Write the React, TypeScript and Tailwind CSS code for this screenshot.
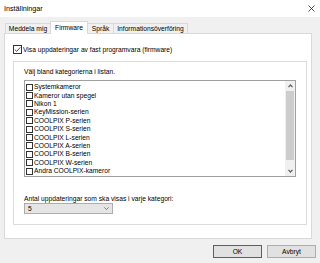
import React from "react";

const items = [
  "Systemkameror",
  "Kameror utan spegel",
  "Nikon 1",
  "KeyMission-serien",
  "COOLPIX P-serien",
  "COOLPIX S-serien",
  "COOLPIX L-serien",
  "COOLPIX A-serien",
  "COOLPIX B-serien",
  "COOLPIX W-serien",
  "Andra COOLPIX-kameror",
  "COOLPIX-tillbehör",
];

export default function App() {
  return (
    <div className="w-[320px] h-[263px] bg-[#f0f0f0] overflow-hidden text-black font-['Liberation_Sans',Arial,sans-serif] text-[6.7px] leading-[8px]">
      {/* Title bar */}
      <div className="h-[17px] bg-white flex items-center justify-between pl-[4px] pr-[5px]">
        <span className="text-[7.2px]">Inställningar</span>
        <svg width="7" height="7" viewBox="0 0 7 7">
          <path d="M0.5 0.5 L6.5 6.5 M6.5 0.5 L0.5 6.5" stroke="#222" strokeWidth="0.8" />
        </svg>
      </div>

      <div className="px-[4px]">
        {/* Tabs */}
        <div className="flex items-end h-[16px] pl-[1px]">
          <div className="w-[46px] h-[10px] border border-b-0 border-[#d9d9d9] bg-[#f0f0f0] flex items-center justify-center">
            Meddela mig
          </div>
          <div className="-ml-[1px] w-[38px] h-[13px] -mb-[1px] border border-b-0 border-[#d9d9d9] bg-white relative z-10 flex items-center justify-center pb-[1px]">
            Firmware
          </div>
          <div className="-ml-[1px] w-[27px] h-[10px] border border-b-0 border-[#d9d9d9] bg-[#f0f0f0] flex items-center justify-center">
            Språk
          </div>
          <div className="-ml-[1px] w-[75px] h-[10px] border border-b-0 border-[#d9d9d9] bg-[#f0f0f0] flex items-center justify-center">
            Informationsöverföring
          </div>
        </div>

        {/* Panel */}
        <div className="w-[308px] h-[206px] border border-[#d9d9d9] bg-white pt-[11px] pl-[8px]">
          <div className="flex items-center h-[9px]">
            <div className="w-[9px] h-[9px] border border-[#333] bg-white flex items-center justify-center">
              <svg width="7" height="7" viewBox="0 0 7 7">
                <path d="M0.8 3.6 L2.7 5.4 L6.3 1.4" stroke="#222" strokeWidth="0.8" fill="none" />
              </svg>
            </div>
            <span className="ml-[1px]">Visa uppdateringar av fast programvara (firmware)</span>
          </div>

          {/* Group box */}
          <div className="mt-[7px] w-[294px] h-[164px] border border-[#dcdcdc] pt-[6px] pl-[10px]">
            <div className="h-[8px]">Välj bland kategorierna i listan.</div>

            {/* Listbox */}
            <div className="mt-[4px] w-[272px] h-[97px] border border-[#a0a0a0] flex bg-white">
              <div className="flex-1 pt-[2px] pl-[1px] overflow-hidden">
                {items.map((it) => (
                  <div key={it} className="h-[8.4px] flex items-center">
                    <div className="w-[7px] h-[7px] border border-[#333] bg-white shrink-0" />
                    <span className="ml-[1px] whitespace-nowrap">{it}</span>
                  </div>
                ))}
              </div>
              <div className="w-[10px] flex flex-col bg-[#f0f0f0]">
                <div className="h-[10px] flex items-center justify-center">
                  <svg width="5" height="4" viewBox="0 0 5 4">
                    <path d="M0.5 3.2 L2.5 1 L4.5 3.2" stroke="#606060" strokeWidth="1.2" fill="none" />
                  </svg>
                </div>
                <div className="h-[69px] mx-[1px] bg-[#cdcdcd]" />
                <div className="flex-1" />
                <div className="h-[10px] flex items-center justify-center">
                  <svg width="5" height="4" viewBox="0 0 5 4">
                    <path d="M0.5 0.8 L2.5 3 L4.5 0.8" stroke="#606060" strokeWidth="1.2" fill="none" />
                  </svg>
                </div>
              </div>
            </div>

            <div className="mt-[18px] h-[8px]">Antal uppdateringar som ska visas i varje kategori:</div>

            {/* Dropdown */}
            <div className="w-[89px] h-[11px] border border-[#adadad] bg-[#e5e5e5] flex items-center justify-between pl-[3px] pr-[3px]">
              <span>5</span>
              <svg width="5" height="3" viewBox="0 0 5 3">
                <path d="M0.4 0.4 L2.5 2.5 L4.6 0.4" stroke="#555" strokeWidth="0.7" fill="none" />
              </svg>
            </div>
          </div>
        </div>
      </div>

      {/* Buttons */}
      <div className="flex justify-end gap-[5px] pr-[4px] mt-[6px]">
        <div className="w-[49px] h-[13px] border border-[#0078d7] bg-[#e1e1e1] flex items-center justify-center">OK</div>
        <div className="w-[49px] h-[13px] border border-[#adadad] bg-[#e1e1e1] flex items-center justify-center">Avbryt</div>
      </div>
    </div>
  );
}
